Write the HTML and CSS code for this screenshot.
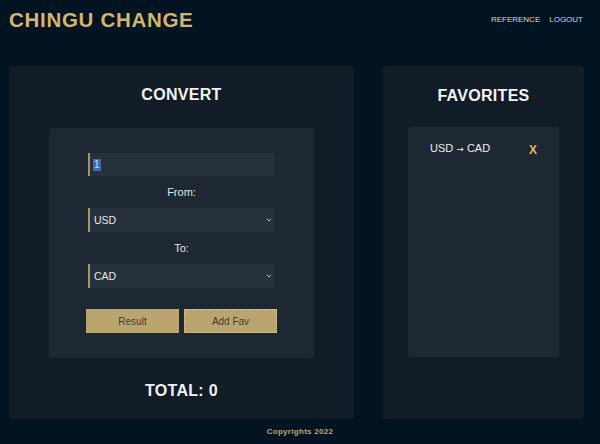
FILE: index.html
```html
<!DOCTYPE html>
<html lang="en">
<head>
<meta charset="utf-8">
<title>Chingu Change</title>
<link rel="stylesheet" href="styles.css">
</head>
<body>
<div class="page">
  <header class="topbar">
    <h1 class="brand">CHINGU CHANGE</h1>
    <nav class="nav">
      <a class="nav-link" href="#">REFERENCE</a>
      <a class="nav-link" href="#">LOGOUT</a>
    </nav>
  </header>
  <main class="main">
    <section class="card card-convert">
      <h2 class="card-title">CONVERT</h2>
      <div class="panel panel-convert">
        <div class="field amount"><span class="selected">1</span></div>
        <label class="label">From:</label>
        <div class="select-wrap">
          <select class="field select"><option>USD</option></select>
          <svg class="chev" width="6" height="4" viewBox="0 0 6 4"><path d="M0.8 0.8 L3 3 L5.2 0.8" fill="none" stroke="#b8bec4" stroke-width="1"/></svg>
        </div>
        <label class="label">To:</label>
        <div class="select-wrap">
          <select class="field select"><option>CAD</option></select>
          <svg class="chev" width="6" height="4" viewBox="0 0 6 4"><path d="M0.8 0.8 L3 3 L5.2 0.8" fill="none" stroke="#b8bec4" stroke-width="1"/></svg>
        </div>
        <div class="buttons">
          <button class="btn">Result</button>
          <button class="btn btn-fav">Add Fav</button>
        </div>
      </div>
      <p class="total">TOTAL: 0</p>
    </section>
    <section class="card card-fav">
      <h2 class="card-title">FAVORITES</h2>
      <div class="panel panel-fav">
        <div class="fav-row">
          <span class="fav-pair">USD <span class="arrow">→</span> CAD</span>
          <span class="fav-remove">X</span>
        </div>
      </div>
    </section>
  </main>
  <footer class="footer">Copyrights 2022</footer>
</div>
</body>
</html>
```
FILE: styles.css
```css
* { box-sizing: border-box; }
html, body { margin: 0; padding: 0; }
body {
  background: #021421;
  font-family: "Liberation Sans", Arial, sans-serif;
  color: #e6e8ea;
}
.page {
  width: 600px;
  height: 444px;
  display: flex;
  flex-direction: column;
  overflow: hidden;
}
.topbar {
  height: 39px;
  display: flex;
  align-items: center;
  justify-content: space-between;
  padding: 0 17px 0 9px;
}
.brand {
  margin: 0;
  font-size: 20.5px;
  line-height: 24px;
  font-weight: 700;
  letter-spacing: 0.7px;
  color: #d4b56f;
}
.nav {
  display: flex;
  gap: 9px;
  padding-bottom: 1px;
}
.nav-link {
  font-size: 8px;
  color: #d3d7db;
  text-decoration: none;
}
.main {
  height: 380px;
  display: flex;
  gap: 29px;
  padding: 27px 16px 0 9px;
}
.card {
  height: 353px;
  background: #111c27;
  border-radius: 3px;
  display: flex;
  flex-direction: column;
  align-items: center;
}
.card-convert { width: 345px; padding-top: 20px; }
.card-fav { width: 201px; padding-top: 21px; }
.card-title {
  margin: 0;
  font-size: 16px;
  line-height: 18px;
  font-weight: 700;
  letter-spacing: 0.3px;
  color: #f2f3f4;
}
.panel {
  background: #1d2833;
  border-radius: 3px;
  height: 230px;
}
.panel-convert {
  width: 265px;
  margin-top: 24px;
  padding: 25px 39px;
  display: flex;
  flex-direction: column;
  align-items: stretch;
}
.field {
  display: block;
  width: 186px;
  height: 23px;
  background: #26313c;
  border: none;
  border-left: 2px solid #a3946c;
  border-radius: 0;
  color: #e8eaec;
  font-family: "Liberation Sans", Arial, sans-serif;
  font-size: 10.5px;
  padding: 0 0 0 3px;
}
.amount {
  display: flex;
  align-items: center;
}
.selected {
  background: #4468a8;
  color: #cfe0ff;
  font-size: 10px;
  line-height: 12px;
  padding: 0 1px;
}
.label {
  display: block;
  text-align: center;
  font-size: 11px;
  line-height: 16px;
  margin: 8px 0;
  color: #e3e5e7;
}
.select-wrap {
  position: relative;
  width: 186px;
  height: 24px;
}
.select {
  height: 24px;
  appearance: none;
  -webkit-appearance: none;
  padding-left: 4px;
  outline: none;
}
.chev {
  position: absolute;
  right: 2px;
  top: 10px;
}
.buttons {
  margin-top: 21px;
  display: flex;
  justify-content: center;
  gap: 5px;
  margin-left: -3px;
  margin-right: -3px;
}
.btn {
  width: 93px;
  height: 24px;
  background: #b9a56d;
  border: none;
  color: #443e2d;
  font-family: "Liberation Sans", Arial, sans-serif;
  font-size: 10px;
  padding: 0;
}
.btn-fav {
  outline: 1px dotted #d8c999;
  outline-offset: -1px;
}
.total {
  margin: 24px 0 0;
  font-size: 16px;
  line-height: 18px;
  font-weight: 700;
  letter-spacing: 0.3px;
  color: #f2f3f4;
}
.panel-fav {
  width: 151px;
  margin-top: 22px;
  padding: 15px 22px 0 22px;
}
.fav-row {
  display: flex;
  justify-content: space-between;
  align-items: flex-start;
}
.fav-pair {
  font-size: 11px;
  line-height: 13px;
  color: #eceef0;
}
.arrow {
  font-family: "DejaVu Sans", sans-serif;
  font-size: 9px;
}
.fav-remove {
  font-size: 12px;
  line-height: 13px;
  margin-top: 2px;
  font-weight: 700;
  color: #e0b962;
}
.footer {
  flex: 1;
  display: flex;
  align-items: center;
  justify-content: center;
  font-size: 8px;
  font-weight: 700;
  letter-spacing: 0.3px;
  color: #bba676;
  padding-bottom: 1px;
}
```
